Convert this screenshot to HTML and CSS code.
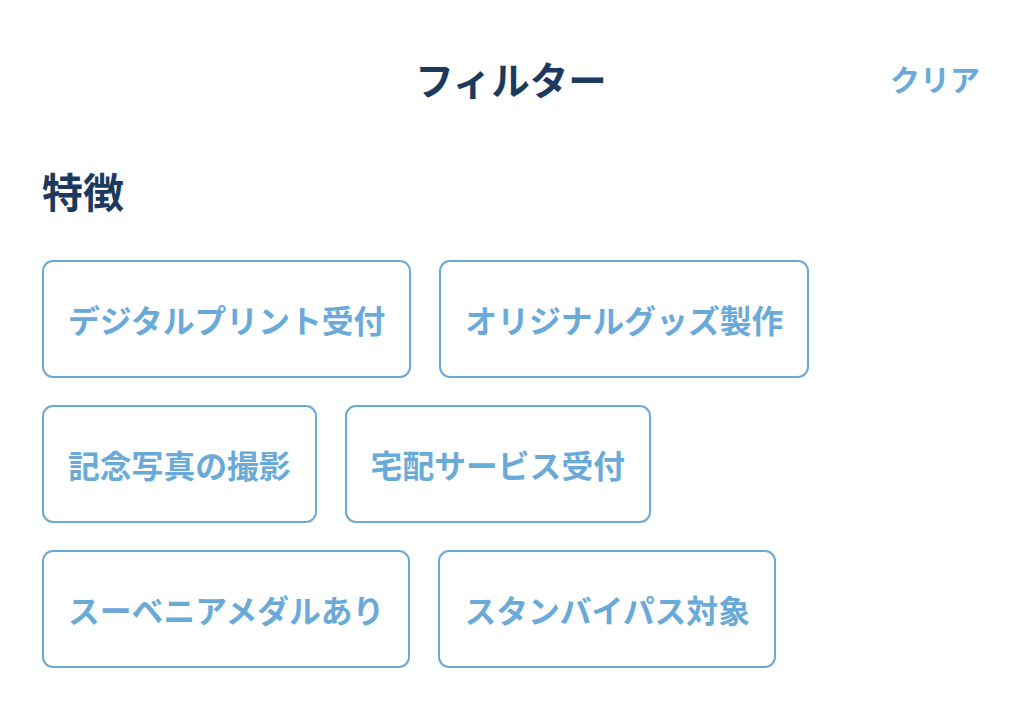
FILE: index.html
```html
<!DOCTYPE html>
<html lang="ja">

<head>
	<meta charset="UTF-8">
	<meta name="viewport" content="width=device-width, initial-scale=1.0">
	<title>フィルター</title>

	<link rel="stylesheet" href="styles.css">
</head>

<body>
	<header class="header">
		<span></span>
		<h1 class="header__title">フィルター</h1>
		<a class="header__clear" href="#">クリア</a>
	</header>

	<section class="filter">
		<h2 class="filter__title">特徴</h2>
		<div class="chips">
			<div class="chips__row">
				<button class="chip">デジタルプリント受付</button>
				<button class="chip">オリジナルグッズ製作</button>
			</div>
			<div class="chips__row">
				<button class="chip">記念写真の撮影</button>
				<button class="chip">宅配サービス受付</button>
			</div>
			<div class="chips__row">
				<button class="chip">スーベニアメダルあり</button>
				<button class="chip">スタンバイパス対象</button>
			</div>
		</div>
	</section>
</body>

</html>
```

FILE: styles.css
```css
body {
	font-family: "Noto Sans CJK JP", "Noto Sans", sans-serif;
	margin: 0;
	padding: 0;
	background-color: #fff;
}

.header {
	display: grid;
	grid-template-columns: 1fr auto 1fr;
	align-items: center;
	height: 78px;
	padding: 39px 44px 0 42px;
}

.header__title {
	margin: 0;
	font-size: 38.5px;
	font-weight: 700;
	color: #1c3a5e;
}

.header__clear {
	justify-self: end;
	font-size: 30px;
	font-weight: 700;
	color: #6aaad8;
	text-decoration: none;
}

.filter {
	padding: 0 42px;
}

.filter__title {
	margin: 49px 0 45px;
	font-size: 41px;
	font-weight: 700;
	color: #1c3a5e;
	line-height: 1.2;
}

.chips {
	display: flex;
	flex-direction: column;
	gap: 27px;
}

.chips__row {
	display: flex;
	gap: 28px;
}

.chip {
	height: 118px;
	padding: 0 24px;
	border: 2px solid #6aaad8;
	border-radius: 11px;
	background: #fff;
	color: #6aaad8;
	font-family: inherit;
	font-size: 31.8px;
	font-weight: 700;
	cursor: pointer;
}
```
